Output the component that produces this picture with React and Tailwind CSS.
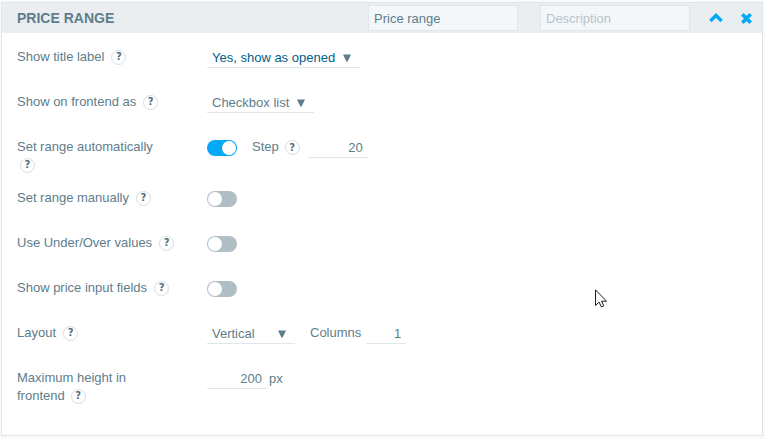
import { useState } from "react";

const Help = ({ className = "ml-[7px]" }) => (
  <span
    className={`${className} inline-flex h-[15px] w-[15px] shrink-0 items-center justify-center rounded-full border border-[#d5dde2] align-[1px] font-['DejaVu_Sans',sans-serif] text-[10px] leading-none font-bold text-[#546e7a]`}
  >
    ?
  </span>
);

const Row = ({ label, help, tall, children }) => (
  <div className={`${tall ? "h-[51px]" : "h-[45px]"} flex items-start`}>
    <div className="w-[190px] shrink-0 leading-[18px]">
      {label}
      {help}
    </div>
    <div className="flex items-start">{children}</div>
  </div>
);

const Select = ({ value, className }) => (
  <button
    type="button"
    className={`${className} flex h-5 items-center justify-between border-b border-[#dfe6ea] pt-px pl-[5px]`}
  >
    <span className="whitespace-nowrap">{value}</span>
    <svg width="8" height="8" viewBox="0 0 8 8" className="shrink-0">
      <path d="M0 0.5h8L4.6 7.5H3.4z" fill="#607d8b" />
    </svg>
  </button>
);

const NumberInput = ({ defaultValue, className }) => (
  <input
    type="text"
    defaultValue={defaultValue}
    className={`${className} h-5 border-b border-[#dfe6ea] pb-px pr-[5px] text-right outline-none`}
  />
);

const Toggle = ({ initial = false }) => {
  const [on, setOn] = useState(initial);

  return (
    <button
      type="button"
      role="switch"
      aria-checked={on}
      onClick={() => setOn(!on)}
      className={`${on ? "justify-end bg-[#03a9f4]" : "justify-start bg-[#b0bec5]"} mt-0.5 flex h-4 w-[30px] items-center rounded-full px-px`}
    >
      <span className="h-3.5 w-3.5 rounded-full bg-white" />
    </button>
  );
};

const App = () => {
  return (
    <div className="h-[439px] w-[765px] overflow-hidden bg-[#f8fafb] pt-0.5 pl-px font-['Liberation_Sans',Arial,sans-serif] text-[13px] text-[#607d8b]">
      <div className="h-[434px] w-[762px] border border-[#dfe6ea] bg-white">
        {/* Header */}
        <div className="flex h-[30px] items-center bg-[#eaeef1] pl-[15px]">
          <h2 className="w-[351px] text-[14px] font-bold">PRICE RANGE</h2>
          <input
            type="text"
            defaultValue="Price range"
            className="h-[26px] w-[150px] border border-[#e0e6ea] bg-[#f3f7fa] px-[5px] outline-none"
          />
          <input
            type="text"
            placeholder="Description"
            className="ml-[22px] h-[26px] w-[150px] border border-[#e0e6ea] bg-[#f3f7fa] px-[5px] outline-none placeholder:text-[#b8c4cb]"
          />
          <button type="button" className="ml-[19px]">
            <svg width="14" height="10" viewBox="0 0 14 10">
              <path d="M1.4 8L7 2.5L12.6 8" fill="none" stroke="#03a9f4" strokeWidth="3.4" />
            </svg>
          </button>
          <button type="button" className="ml-[18px]">
            <svg width="11" height="11" viewBox="0 0 11 11">
              <path d="M1.3 1.3l8.4 8.4M9.7 1.3L1.3 9.7" stroke="#03a9f4" strokeWidth="3.6" />
            </svg>
          </button>
        </div>

        {/* Settings */}
        <div className="pt-[15px] pl-[15px]">
          <Row label="Show title label" help={<Help />}>
            <Select value="Yes, show as opened" className="w-[153px] pr-[9px] text-[#016087]" />
          </Row>
          <Row label="Show on frontend as" help={<Help />}>
            <Select value="Checkbox list" className="w-[107px] pr-[9px]" />
          </Row>
          <Row label={<>Set range automatically<br /></>} help={<Help className="ml-[3px]" />} tall>
            <Toggle initial />
            <span className="ml-[15px] leading-[18px]">Step</span>
            <Help className="mt-0.5 ml-1.5" />
            <NumberInput defaultValue="20" className="ml-2 w-[60px]" />
          </Row>
          <Row label="Set range manually" help={<Help />}>
            <Toggle />
          </Row>
          <Row label="Use Under/Over values" help={<Help />}>
            <Toggle />
          </Row>
          <Row label="Show price input fields" help={<Help />}>
            <Toggle />
          </Row>
          <Row label="Layout" help={<Help />}>
            <Select value="Vertical" className="w-[88px] pr-[9px]" />
            <span className="ml-[15px] leading-[18px]">Columns</span>
            <NumberInput defaultValue="1" className="ml-[5px] w-10" />
          </Row>
          <Row label={<>Maximum height in<br />frontend</>} help={<Help className="ml-1.5" />}>
            <NumberInput defaultValue="200" className="w-[60px]" />
            <span className="ml-0.5 pt-px leading-[18px]">px</span>
          </Row>
        </div>
      </div>

      {/* Mouse pointer */}
      <svg className="absolute top-[289px] left-[595px]" width="13" height="20" viewBox="0 0 13 20">
        <path
          d="M0.5 0.8v15.7l3.6-3.4 2.2 4.8 2.4-1-2.1-4.7h4.9z"
          fill="#fff"
          stroke="#1c1c2a"
          strokeWidth="1"
        />
      </svg>
    </div>
  );
};

export default App;
